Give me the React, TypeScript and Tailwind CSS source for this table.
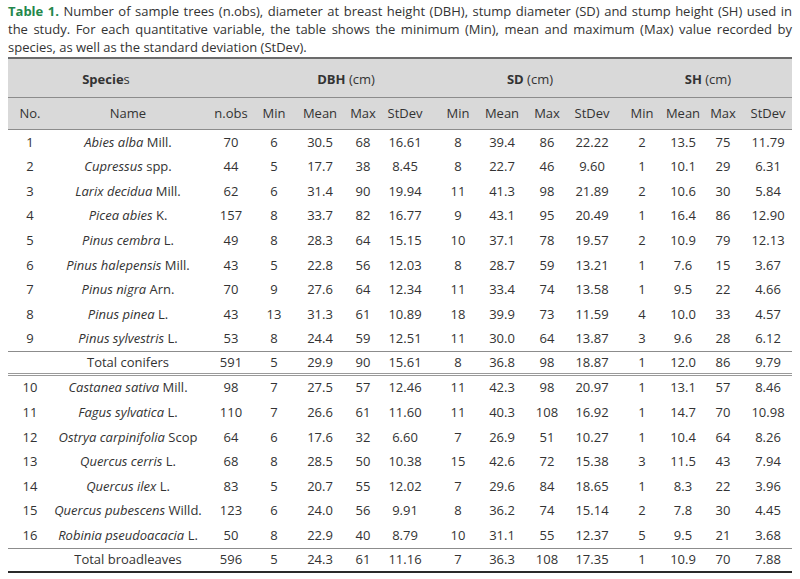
import React from "react";

type Row = {
  no?: string;
  genus?: string;
  author?: string;
  label?: string;
  vals: string[];
};

const conifers: Row[] = [
  { no: "1", genus: "Abies alba", author: "Mill.", vals: ["70", "6", "30.5", "68", "16.61", "8", "39.4", "86", "22.22", "2", "13.5", "75", "11.79"] },
  { no: "2", genus: "Cupressus", author: "spp.", vals: ["44", "5", "17.7", "38", "8.45", "8", "22.7", "46", "9.60", "1", "10.1", "29", "6.31"] },
  { no: "3", genus: "Larix decidua", author: "Mill.", vals: ["62", "6", "31.4", "90", "19.94", "11", "41.3", "98", "21.89", "2", "10.6", "30", "5.84"] },
  { no: "4", genus: "Picea abies", author: "K.", vals: ["157", "8", "33.7", "82", "16.77", "9", "43.1", "95", "20.49", "1", "16.4", "86", "12.90"] },
  { no: "5", genus: "Pinus cembra", author: "L.", vals: ["49", "8", "28.3", "64", "15.15", "10", "37.1", "78", "19.57", "2", "10.9", "79", "12.13"] },
  { no: "6", genus: "Pinus halepensis", author: "Mill.", vals: ["43", "5", "22.8", "56", "12.03", "8", "28.7", "59", "13.21", "1", "7.6", "15", "3.67"] },
  { no: "7", genus: "Pinus nigra", author: "Arn.", vals: ["70", "9", "27.6", "64", "12.34", "11", "33.4", "74", "13.58", "1", "9.5", "22", "4.66"] },
  { no: "8", genus: "Pinus pinea", author: "L.", vals: ["43", "13", "31.3", "61", "10.89", "18", "39.9", "73", "11.59", "4", "10.0", "33", "4.57"] },
  { no: "9", genus: "Pinus sylvestris", author: "L.", vals: ["53", "8", "24.4", "59", "12.51", "11", "30.0", "64", "13.87", "3", "9.6", "28", "6.12"] },
];

const broadleaves: Row[] = [
  { no: "10", genus: "Castanea sativa", author: "Mill.", vals: ["98", "7", "27.5", "57", "12.46", "11", "42.3", "98", "20.97", "1", "13.1", "57", "8.46"] },
  { no: "11", genus: "Fagus sylvatica", author: "L.", vals: ["110", "7", "26.6", "61", "11.60", "11", "40.3", "108", "16.92", "1", "14.7", "70", "10.98"] },
  { no: "12", genus: "Ostrya carpinifolia", author: "Scop", vals: ["64", "6", "17.6", "32", "6.60", "7", "26.9", "51", "10.27", "1", "10.4", "64", "8.26"] },
  { no: "13", genus: "Quercus cerris", author: "L.", vals: ["68", "8", "28.5", "50", "10.38", "15", "42.6", "72", "15.38", "3", "11.5", "43", "7.94"] },
  { no: "14", genus: "Quercus ilex", author: "L.", vals: ["83", "5", "20.7", "55", "12.02", "7", "29.6", "84", "18.65", "1", "8.3", "22", "3.96"] },
  { no: "15", genus: "Quercus pubescens", author: "Willd.", vals: ["123", "6", "24.0", "56", "9.91", "8", "36.2", "74", "15.14", "2", "7.8", "30", "4.45"] },
  { no: "16", genus: "Robinia pseudoacacia", author: "L.", vals: ["50", "8", "22.9", "40", "8.79", "10", "31.1", "55", "12.37", "5", "9.5", "21", "3.68"] },
];

const totalConifers: Row = { label: "Total conifers", vals: ["591", "5", "29.9", "90", "15.61", "8", "36.8", "98", "18.87", "1", "12.0", "86", "9.79"] };
const totalBroadleaves: Row = { label: "Total broadleaves", vals: ["596", "5", "24.3", "61", "11.16", "7", "36.3", "108", "17.35", "1", "10.9", "70", "7.88"] };

// column tracks: No, Name, n.obs, DBH x4, SD x4, SH x4, trailing space
const cols = "grid grid-cols-[44px_152px_54px_32px_60px_26px_58px_48px_40px_50px_40px_60px_22px_58px_32px_8px]";

function Cell({ children }: { children?: React.ReactNode }) {
  return <div className="flex items-center justify-center whitespace-nowrap">{children}</div>;
}

function DataRow({ row, className = "" }: { row: Row; className?: string }) {
  return (
    <div className={`${cols} h-[24.6px] ${className}`}>
      <Cell>{row.no}</Cell>
      <Cell>
        {row.label ? (
          row.label
        ) : (
          <span>
            <i>{row.genus}</i> {row.author}
          </span>
        )}
      </Cell>
      {row.vals.map((v, i) => (
        <Cell key={i}>{v}</Cell>
      ))}
      <div />
    </div>
  );
}

export default function App() {
  return (
    <div className="w-[800px] h-[579px] overflow-hidden bg-white font-['Open_Sans',sans-serif] text-[13px] text-[#333333]">
      <p className="px-2 pt-[2px] leading-[18px] text-justify [text-align-last:left]">
        <span className="font-bold text-[#24874b]">Table 1.</span> Number of sample trees (n.obs), diameter at breast height
        (DBH), stump diameter (SD) and stump height (SH) used in the study. For each quantitative variable, the table shows the
        minimum (Min), mean and maximum (Max) value recorded by species, as well as the standard deviation (StDev).
      </p>

      <div className="mx-2 mt-[1px]">
        {/* group header */}
        <div className={`${cols} h-[41px] bg-[#d9d9d9] border-t-2 border-[#6b6b6b] border-b border-b-[#8c8c8c] pt-[4px]`}>
          <div className="col-span-2 flex items-center justify-center">
            <span>
              <b>Specie</b>s
            </span>
          </div>
          <div />
          <div className="col-span-4 flex items-center justify-center">
            <span>
              <b>DBH</b> (cm)
            </span>
          </div>
          <div className="col-span-4 flex items-center justify-center pl-[14px]">
            <span>
              <b>SD</b> (cm)
            </span>
          </div>
          <div className="col-span-5 flex items-center justify-center pl-[12px]">
            <span>
              <b>SH</b> (cm)
            </span>
          </div>
        </div>

        {/* column header */}
        <div className={`${cols} h-[32px] bg-[#d9d9d9] border-b border-[#8c8c8c]`}>
          {["No.", "Name", "n.obs", "Min", "Mean", "Max", "StDev", "Min", "Mean", "Max", "StDev", "Min", "Mean", "Max", "StDev"].map(
            (h, i) => (
              <Cell key={i}>{h}</Cell>
            )
          )}
          <div />
        </div>

        {conifers.map((r) => (
          <DataRow key={r.no} row={r} />
        ))}
        <DataRow row={totalConifers} className="border-t border-[#8c8c8c] border-b-[3px] border-b-[#9a9a9a] border-double" />

        {broadleaves.map((r) => (
          <DataRow key={r.no} row={r} />
        ))}
        <DataRow row={totalBroadleaves} className="border-t border-[#8c8c8c] border-b-2 border-b-[#2a2a2a]" />
      </div>
    </div>
  );
}
